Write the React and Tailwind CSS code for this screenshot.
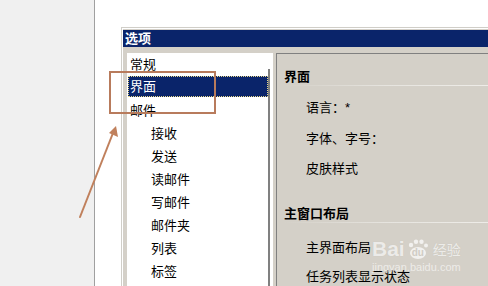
import React from "react";

const font = "font-['Liberation_Sans','Noto_Sans_CJK_SC',sans-serif]";

function ListRow({ label, indent, selected }) {
  if (selected) {
    return (
      <div className="h-[23px] flex items-start">
        <div className="ml-[1px] h-[21px] w-[140px] bg-[#0a246a] border border-dotted border-[#e8d88a] flex items-center pl-[1px] text-white">
          {label}
        </div>
      </div>
    );
  }
  return (
    <div className={`h-[23px] flex items-center ${indent ? "pl-[24px]" : "pl-[3px]"} text-black`}>
      {label}
    </div>
  );
}

export default function App() {
  const items = [
    { label: "常规" },
    { label: "界面", selected: true },
    { label: "邮件" },
    { label: "接收", indent: true },
    { label: "发送", indent: true },
    { label: "读邮件", indent: true },
    { label: "写邮件", indent: true },
    { label: "邮件夹", indent: true },
    { label: "列表", indent: true },
    { label: "标签", indent: true },
  ];

  return (
    <div className={`relative w-[488px] h-[286px] overflow-hidden bg-white flex text-[13px] leading-none ${font}`}>
      {/* left blank pane */}
      <div className="w-[95px] h-full bg-[#f0f0f0] border-r border-[#a0a0a0] shrink-0" />

      {/* area with dialog */}
      <div className="flex-1 pl-[26px] pt-[27px] min-w-0">
        <div className="h-[300px] border-l border-t border-[#d0cec8]">
          <div className="h-full border-l border-t border-white bg-[#d4d0c8] pt-[1px]">
            {/* title bar */}
            <div className="h-[17px] bg-[#0a246a] flex items-center pl-[2px] text-white font-bold">
              选项
            </div>
            {/* body */}
            <div className="pt-[6px] pl-[4px] flex gap-[3px] h-full">
              {/* tree list */}
              <div className="w-[146px] bg-white flex shrink-0 h-[240px]">
                <div className="w-[141px] flex flex-col">
                  {items.map((it) => (
                    <ListRow key={it.label} {...it} />
                  ))}
                </div>
                <div className="w-[2px] mt-[16px] bg-[#808080]" />
                <div className="w-[3px]" />
              </div>
              {/* right panel */}
              <div className="flex-1 border-l border-t border-[#808080] bg-[#d4d0c8] pl-[7px] flex flex-col">
                <div className="mt-[14px] h-[16px] flex items-center font-bold text-black">界面</div>
                <div className="mt-[1px] h-px bg-gradient-to-r from-[#d4d0c8] via-[#e6e4df] to-[#eeece8]" />
                <div className="mt-[13px] h-[16px] flex items-center pl-[22px] text-black">语言：*</div>
                <div className="mt-[15px] h-[16px] flex items-center pl-[22px] text-black">字体、字号：</div>
                <div className="mt-[14px] h-[16px] flex items-center pl-[22px] text-black">皮肤样式</div>
                <div className="mt-[29px] h-[16px] flex items-center font-bold text-black">主窗口布局</div>
                <div className="mt-[1px] h-px bg-gradient-to-r from-[#d4d0c8] via-[#e6e4df] to-[#eeece8]" />
                <div className="mt-[16px] h-[16px] flex items-center pl-[22px] text-black">主界面布局</div>
                <div className="mt-[13px] h-[16px] flex items-center pl-[22px] text-black">任务列表显示状态</div>
              </div>
            </div>
          </div>
        </div>
      </div>

      {/* orange highlight box */}
      <div className="absolute left-[109px] top-[71px] w-[107px] h-[43px] border-2 border-[#b87b5c]" />

      {/* arrow */}
      <svg className="absolute left-0 top-0" width="488" height="286" viewBox="0 0 488 286">
        <line x1="80" y1="217" x2="113" y2="133" stroke="#c0805c" strokeWidth="2" strokeLinecap="round" />
        <path d="M116 126 L118 137 L109 133 Z" fill="#c0805c" />
      </svg>

      {/* watermark */}
      <div className="absolute left-[372px] top-[238px] flex flex-col items-start text-white/70">
        <div className="flex items-center gap-[2px]">
          <span className="text-[21px] font-bold leading-none font-['Liberation_Sans',sans-serif] [text-shadow:0_0_1px_#c4c0b8]">Bai</span>
          <span className="relative w-[22px] h-[20px]">
            <svg width="22" height="20" viewBox="0 0 22 20">
              <ellipse cx="11" cy="14" rx="8" ry="6" fill="rgba(255,255,255,0.7)" />
              <circle cx="4" cy="6" r="2.2" fill="rgba(255,255,255,0.7)" />
              <circle cx="9" cy="2.8" r="2.2" fill="rgba(255,255,255,0.7)" />
              <circle cx="14.5" cy="2.8" r="2.2" fill="rgba(255,255,255,0.7)" />
              <circle cx="19" cy="6.5" r="2" fill="rgba(255,255,255,0.7)" />
            </svg>
            <span className="absolute left-[5px] top-[9px] text-[10px] font-bold text-[#d0ccc4] leading-none font-['Liberation_Sans',sans-serif]">du</span>
          </span>
          <span className="text-[14px] ml-[2px] leading-none font-['Noto_Sans_CJK_SC',sans-serif] [text-shadow:0_0_1px_#c4c0b8]">经验</span>
        </div>
        <div className="mt-[3px] text-[11px] leading-none font-['Liberation_Sans',sans-serif] text-white/60">jingyan.baidu.com</div>
      </div>
    </div>
  );
}
